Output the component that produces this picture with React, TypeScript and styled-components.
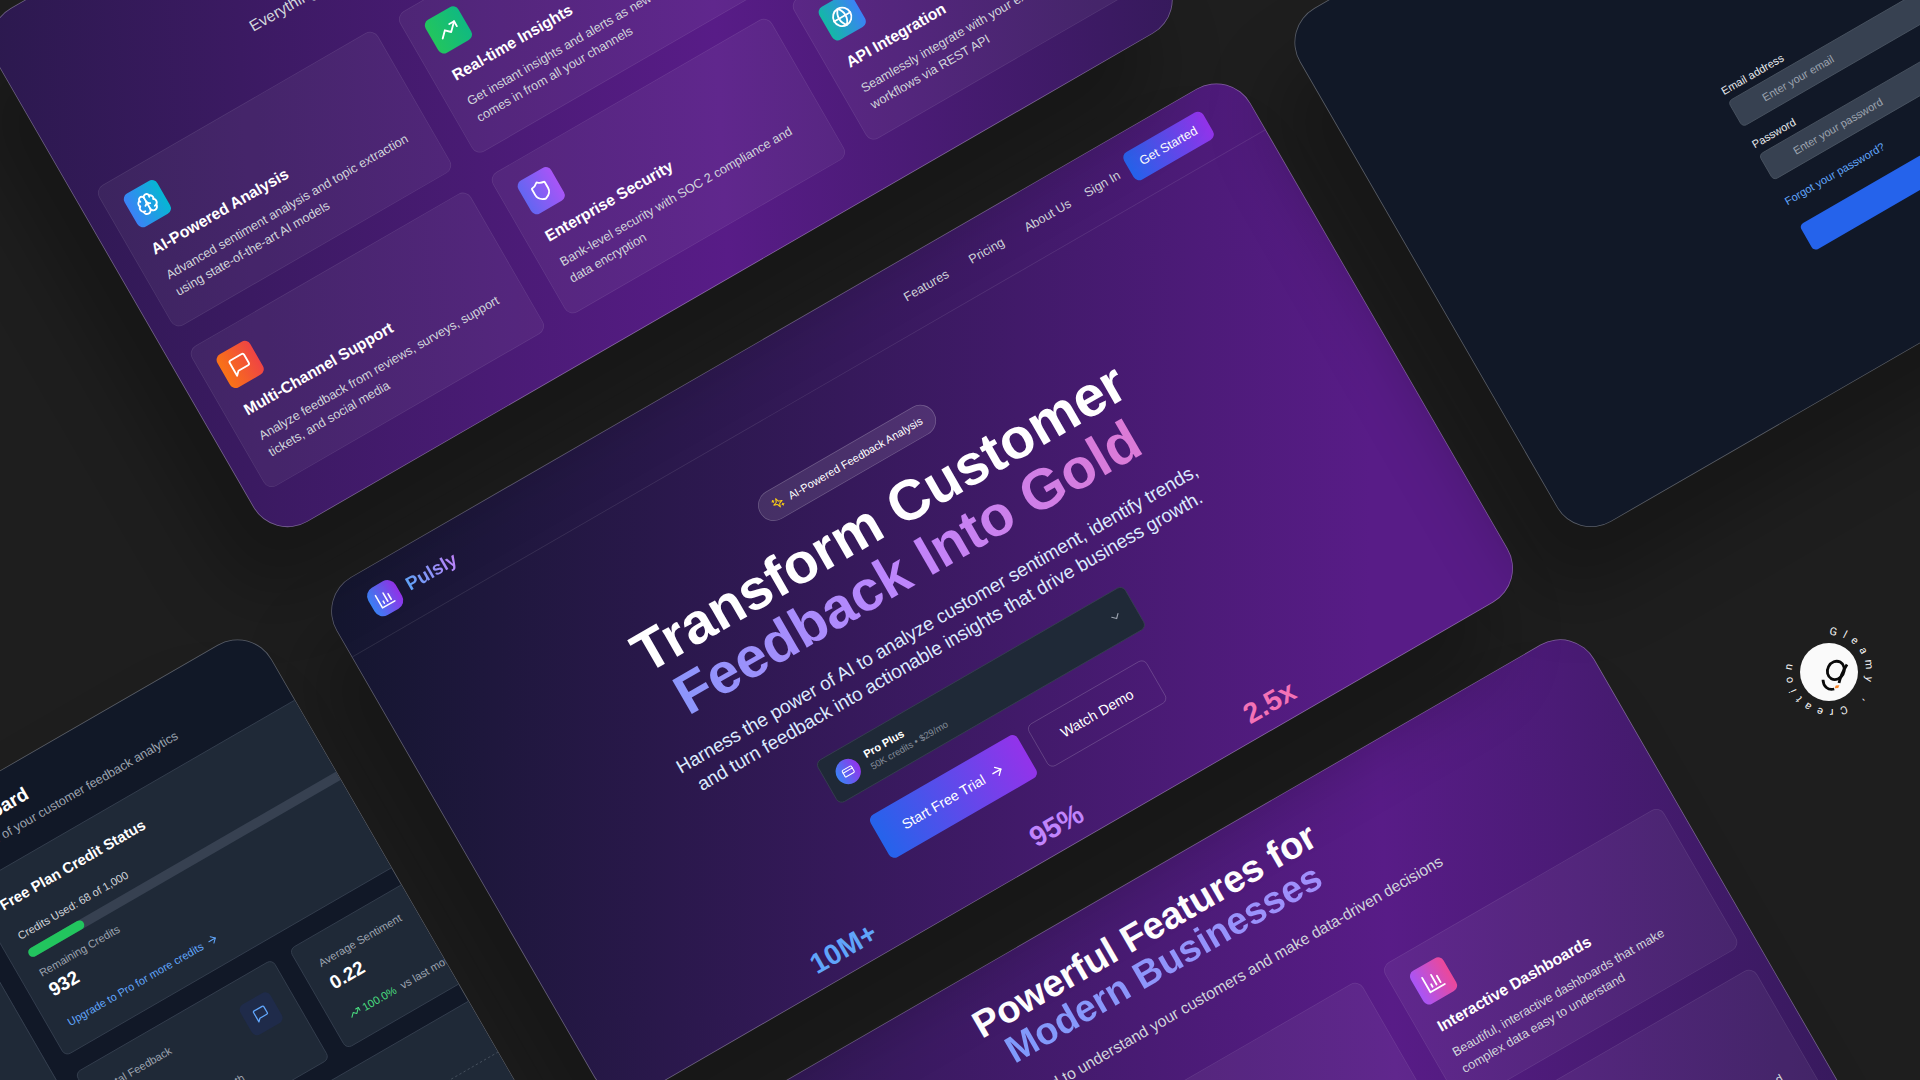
import React from "react";
import styled, { createGlobalStyle } from "styled-components";
import {
  ArrowRight,
  Brain,
  ChevronDown,
  CreditCard,
  Globe,
  Shield,
  TrendingUp,
} from "lucide-react";

const GlobalStyle = createGlobalStyle`
  *, *::before, *::after { box-sizing: border-box; }
  body {
    margin: 0;
    background: #1e1e1e;
    font-family: "Liberation Sans", Arial, sans-serif;
    color: #ffffff;
    overflow: hidden;
  }
  h1, h2, h3, p { margin: 0; }
  a { color: inherit; text-decoration: none; }
  button, input { font-family: inherit; }
`;

/* ---------- Board ---------- */

const Stage = styled.main`
  position: relative;
  min-height: 100vh;
  overflow: hidden;
`;

const Board = styled.div`
  position: absolute;
  left: 50%;
  top: 50%;
  transform-origin: 0 0;
  transform: rotate(-30deg) scale(0.79);
`;

const Window = styled.section<{ $x: number; $y: number; $fill: string }>`
  position: absolute;
  left: ${(p) => p.$x}px;
  top: ${(p) => p.$y}px;
  width: 1336px;
  height: 751px;
  overflow: hidden;
  border: 1px solid rgba(255, 255, 255, 0.3);
  border-radius: 50px;
  background: ${(p) => p.$fill};
  background-origin: border-box;
  box-shadow: -64px 64px 90px rgba(0, 0, 0, 0.25);
`;

const HERO_FILL = "linear-gradient(120deg, #13162e, #581c87 87%)";
const FEATURES_FILL =
  "linear-gradient(117deg, #0f172a -38%, #581c87 61%, #0f172a 143%)";
const DARK_FILL = "#111827";

/* ---------- Icons ---------- */

const Line = ({ size, d }: { size: number; d: string[] }) => (
  <svg
    width={size}
    height={size}
    viewBox="0 0 24 24"
    fill="none"
    stroke="currentColor"
    strokeWidth={2}
    strokeLinecap="round"
    strokeLinejoin="round"
    aria-hidden="true"
  >
    {d.map((path) => (
      <path key={path} d={path} />
    ))}
  </svg>
);

const ChartIcon = ({ size = 24 }: { size?: number }) => (
  <Line size={size} d={["M3 3v18h18", "M18 17V9", "M13 17V5", "M8 17v-3"]} />
);

const MessageIcon = ({ size = 24 }: { size?: number }) => (
  <Line
    size={size}
    d={["M21 15a2 2 0 0 1-2 2H7l-4 4V5a2 2 0 0 1 2-2h14a2 2 0 0 1 2 2z"]}
  />
);

const SparklesIcon = ({ size = 24 }: { size?: number }) => (
  <Line
    size={size}
    d={[
      "m12 3-1.912 5.813a2 2 0 0 1-1.275 1.275L3 12l5.813 1.912a2 2 0 0 1 1.275 1.275L12 21l1.912-5.813a2 2 0 0 1 1.275-1.275L21 12l-5.813-1.912a2 2 0 0 1-1.275-1.275L12 3Z",
      "M5 3v4",
      "M19 17v4",
      "M3 5h4",
      "M17 19h4",
    ]}
  />
);

/* ---------- Hero ---------- */

const Header = styled.header`
  display: flex;
  align-items: center;
  height: 88px;
  padding: 0 58px 0 53px;
  border-bottom: 1px solid rgba(255, 255, 255, 0.1);
`;

const Brand = styled.a`
  display: flex;
  align-items: center;
  gap: 12px;
  margin-right: auto;
`;

const BrandMark = styled.span`
  display: grid;
  place-items: center;
  width: 40px;
  height: 40px;
  border-radius: 12px;
  background: linear-gradient(90deg, #3b82f6, #9333ea);
`;

const BrandName = styled.span`
  font-size: 24px;
  line-height: 32px;
  font-weight: 700;
  background: linear-gradient(90deg, #60a5fa, #c084fc);
  background-clip: text;
  -webkit-background-clip: text;
  color: transparent;
`;

const Nav = styled.nav`
  display: flex;
  gap: 32px;
  font-size: 16px;
  color: #d1d5db;
`;

const SignIn = styled.a`
  margin: 0 14px 0 22px;
  font-size: 16px;
  color: #d1d5db;
`;

const GetStarted = styled.button`
  height: 40px;
  padding: 0 17px;
  border: 0;
  border-radius: 8px;
  background: linear-gradient(90deg, #2563eb, #9333ea);
  color: #ffffff;
  font-size: 16px;
`;

const HeroBody = styled.div`
  display: flex;
  flex-direction: column;
  align-items: center;
  padding: 80px 58px 0 54px;
  text-align: center;
`;

const Pill = styled.span`
  display: flex;
  align-items: center;
  gap: 8px;
  height: 40px;
  padding: 0 17px;
  margin-bottom: 24px;
  border: 1px solid rgba(255, 255, 255, 0.2);
  border-radius: 20px;
  background: rgba(255, 255, 255, 0.1);
  font-size: 14px;
  font-weight: 500;

  svg { color: #facc15; }
`;

const HeroTitle = styled.h1`
  align-self: stretch;
  margin-bottom: 24px;
  font-size: 72px;
  line-height: 72px;
  font-weight: 700;
`;

const GradientLine = styled.span<{ $fill: string }>`
  display: block;
  background: ${(p) => p.$fill};
  background-clip: text;
  -webkit-background-clip: text;
  color: transparent;
`;

const Lead = styled.p`
  max-width: 768px;
  margin-bottom: 32px;
  font-size: 24px;
  line-height: 32px;
  color: #dbeafe;
`;

const PlanPicker = styled.button`
  display: flex;
  align-items: center;
  gap: 12px;
  width: 450px;
  margin-bottom: 32px;
  padding: 12px 18px 12px 14px;
  border: 1px solid #374151;
  border-radius: 8px;
  background: #1f2937;
  color: #9ca3af;
  text-align: left;
`;

const PlanBadge = styled.span`
  display: grid;
  place-items: center;
  width: 32px;
  height: 32px;
  border-radius: 50%;
  background: linear-gradient(90deg, #3b82f6, #9333ea);
  color: #ffffff;
`;

const PlanText = styled.span`
  display: flex;
  flex: 1;
  flex-direction: column;
`;

const PlanName = styled.span`
  font-size: 14px;
  line-height: 20px;
  font-weight: 600;
  color: #ffffff;
`;

const PlanNote = styled.span`
  font-size: 12px;
  line-height: 16px;
  color: #848c99;
`;

const Actions = styled.div`
  display: flex;
  gap: 16px;
  margin-bottom: 46px;
`;

const Action = styled.button<{ $primary?: boolean }>`
  display: flex;
  align-items: center;
  gap: 8px;
  height: 62px;
  padding: 0 34px;
  border: ${(p) => (p.$primary ? "0" : "1px solid rgba(255, 255, 255, 0.2)")};
  border-radius: 8px;
  background: ${(p) =>
    p.$primary ? "linear-gradient(90deg, #2563eb, #9333ea)" : "transparent"};
  color: #ffffff;
  font-size: 18px;
`;

const Stats = styled.div`
  display: grid;
  grid-template-columns: repeat(3, 1fr);
  gap: 34px;
  width: 900px;
`;

const Stat = styled.strong<{ $color: string }>`
  font-size: 36px;
  line-height: 40px;
  font-weight: 700;
  color: ${(p) => p.$color};
`;

const Hero = () => (
  <>
    <Header>
      <Brand href="#">
        <BrandMark>
          <ChartIcon />
        </BrandMark>
        <BrandName>Pulsly</BrandName>
      </Brand>
      <Nav>
        <a href="#features">Features</a>
        <a href="#pricing">Pricing</a>
        <a href="#about">About Us</a>
      </Nav>
      <SignIn href="#signin">Sign In</SignIn>
      <GetStarted type="button">Get Started</GetStarted>
    </Header>
    <HeroBody>
      <Pill>
        <SparklesIcon size={16} />
        AI-Powered Feedback Analysis
      </Pill>
      <HeroTitle>
        Transform Customer
        <GradientLine $fill="linear-gradient(90deg, #60a5fa, #c084fc, #f472b6)">
          Feedback Into Gold
        </GradientLine>
      </HeroTitle>
      <Lead>
        Harness the power of AI to analyze customer sentiment, identify trends,
        and turn feedback into actionable insights that drive business growth.
      </Lead>
      <PlanPicker type="button" aria-haspopup="listbox">
        <PlanBadge>
          <CreditCard size={16} />
        </PlanBadge>
        <PlanText>
          <PlanName>Pro Plus</PlanName>
          <PlanNote>50K credits • $29/mo</PlanNote>
        </PlanText>
        <ChevronDown size={18} />
      </PlanPicker>
      <Actions>
        <Action type="button" $primary>
          Start Free Trial
          <ArrowRight size={20} />
        </Action>
        <Action type="button">Watch Demo</Action>
      </Actions>
      <Stats>
        <Stat $color="#60a5fa">10M+</Stat>
        <Stat $color="#c084fc">95%</Stat>
        <Stat $color="#f472b6">2.5x</Stat>
      </Stats>
    </HeroBody>
  </>
);

/* ---------- Features ---------- */

const FeaturesBody = styled.div`
  padding: 38px 20px 0 26px;
  text-align: center;
`;

const FeaturesTitle = styled.h2`
  margin-bottom: 24px;
  font-size: 48px;
  line-height: 48px;
  font-weight: 700;
`;

const FeaturesLead = styled.p`
  margin-bottom: 65px;
  font-size: 20px;
  line-height: 28px;
  color: #d1d5db;
`;

const FeatureGrid = styled.div`
  display: grid;
  grid-template-columns: repeat(3, 1fr);
  gap: 30px 32px;
  text-align: left;
`;

const FeatureCard = styled.article`
  padding: 24px;
  border: 1px solid rgba(255, 255, 255, 0.08);
  border-radius: 12px;
  background: rgba(255, 255, 255, 0.05);
`;

const FeatureIcon = styled.span<{ $from: string; $to: string }>`
  display: grid;
  place-items: center;
  width: 48px;
  height: 48px;
  margin-bottom: 16px;
  border-radius: 8px;
  background: linear-gradient(90deg, ${(p) => p.$from}, ${(p) => p.$to});
`;

const FeatureName = styled.h3`
  margin-bottom: 12px;
  font-size: 20px;
  line-height: 28px;
  font-weight: 600;
`;

const FeatureText = styled.p`
  min-height: 51px;
  font-size: 16px;
  line-height: 24px;
  color: #d1d5db;
`;

const FEATURES = [
  {
    icon: <Brain size={28} />,
    from: "#3b82f6",
    to: "#06b6d4",
    name: "AI-Powered Analysis",
    text: "Advanced sentiment analysis and topic extraction using state-of-the-art AI models",
  },
  {
    icon: <TrendingUp size={28} />,
    from: "#22c55e",
    to: "#10b981",
    name: "Real-time Insights",
    text: "Get instant insights and alerts as new feedback comes in from all your channels",
  },
  {
    icon: <ChartIcon size={28} />,
    from: "#a855f7",
    to: "#ec4899",
    name: "Interactive Dashboards",
    text: "Beautiful, interactive dashboards that make complex data easy to understand",
  },
  {
    icon: <MessageIcon size={28} />,
    from: "#f97316",
    to: "#ef4444",
    name: "Multi-Channel Support",
    text: "Analyze feedback from reviews, surveys, support tickets, and social media",
  },
  {
    icon: <Shield size={28} />,
    from: "#6366f1",
    to: "#a855f7",
    name: "Enterprise Security",
    text: "Bank-level security with SOC 2 compliance and data encryption",
  },
  {
    icon: <Globe size={28} />,
    from: "#14b8a6",
    to: "#3b82f6",
    name: "API Integration",
    text: "Seamlessly integrate with your existing tools and workflows via REST API",
  },
];

const Features = () => (
  <FeaturesBody>
    <FeaturesTitle>
      Powerful Features for
      <GradientLine $fill="linear-gradient(90deg, #60a5fa, #c084fc)">
        Modern Businesses
      </GradientLine>
    </FeaturesTitle>
    <FeaturesLead>
      Everything you need to understand your customers and make data-driven
      decisions
    </FeaturesLead>
    <FeatureGrid>
      {FEATURES.map((f) => (
        <FeatureCard key={f.name}>
          <FeatureIcon $from={f.from} $to={f.to}>
            {f.icon}
          </FeatureIcon>
          <FeatureName>{f.name}</FeatureName>
          <FeatureText>{f.text}</FeatureText>
        </FeatureCard>
      ))}
    </FeatureGrid>
  </FeaturesBody>
);

/* ---------- Login ---------- */

const LoginForm = styled.form`
  display: flex;
  flex-direction: column;
  width: 448px;
  margin: 339px auto 0;
`;

const Field = styled.label`
  display: flex;
  flex-direction: column;
  gap: 4px;
  margin-bottom: 16px;
  font-size: 14px;
  line-height: 20px;
  color: #e5e7eb;
`;

const Input = styled.input`
  height: 38px;
  padding: 0 12px 0 40px;
  border: 1px solid #4b5563;
  border-radius: 6px;
  background: #374151;
  color: #ffffff;
  font-size: 14px;

  &::placeholder { color: #9ca3af; }
`;

const Forgot = styled.a`
  align-self: flex-start;
  margin: 5px 0 24px;
  font-size: 14px;
  line-height: 20px;
  color: #60a5fa;
`;

const Submit = styled.button`
  height: 38px;
  border: 0;
  border-radius: 6px;
  background: #2563eb;
  color: #ffffff;
  font-size: 14px;
`;

const Login = () => (
  <LoginForm>
    <Field>
      Email address
      <Input type="email" placeholder="Enter your email" />
    </Field>
    <Field>
      Password
      <Input type="password" placeholder="Enter your password" />
    </Field>
    <Forgot href="#forgot">Forgot your password?</Forgot>
    <Submit type="button">Sign in</Submit>
  </LoginForm>
);

/* ---------- Dashboard ---------- */

const DashLayout = styled.div`
  display: flex;
  height: 100%;
`;

const Sidebar = styled.aside`
  flex: 0 0 833px;
  border-right: 1px solid #374151;
  background: #1f2937;
`;

const DashMain = styled.div`
  display: flex;
  flex: 0 0 auto;
  flex-direction: column;
  gap: 24px;
  width: 1274px;
  padding: 24px;
`;

const DashTitle = styled.h2`
  font-size: 24px;
  line-height: 32px;
  font-weight: 700;
`;

const DashSub = styled.p`
  margin-top: 4px;
  font-size: 16px;
  line-height: 24px;
  color: #9ca3af;
`;

const Panel = styled.article`
  padding: 24px;
  border: 1px solid #374151;
  border-radius: 8px;
  background: #1f2937;
`;

const PanelTitle = styled.h3`
  margin-bottom: 18px;
  font-size: 19px;
  line-height: 32px;
  font-weight: 600;
`;

const Small = styled.p`
  font-size: 14px;
  line-height: 20px;
  color: #9ca3af;
`;

const Used = styled(Small)`
  margin-bottom: 10px;
  color: #d1d5db;
`;

const Track = styled.div`
  height: 12px;
  margin-bottom: 12px;
  border-radius: 6px;
  background: #374151;
`;

const Fill = styled.div`
  height: 100%;
  border-radius: 6px;
  background: #22c55e;
`;

const Value = styled.p`
  font-size: 24px;
  line-height: 32px;
  font-weight: 700;
`;

const Upgrade = styled.a`
  display: flex;
  align-items: center;
  gap: 6px;
  margin-top: 20px;
  font-size: 14px;
  line-height: 20px;
  color: #60a5fa;
`;

const CardRow = styled.div<{ $cols: number }>`
  display: grid;
  grid-template-columns: repeat(${(p) => p.$cols}, 1fr);
  gap: 24px;
`;

const MetricTop = styled.div`
  display: flex;
  align-items: center;
  justify-content: space-between;
  margin-bottom: 20px;

  ${Value} { margin-top: 4px; }
`;

const MetricIcon = styled.span`
  display: grid;
  place-items: center;
  width: 44px;
  height: 44px;
  border-radius: 8px;
  background: #1f2b4a;
  color: #60a5fa;
`;

const Trend = styled.div`
  display: flex;
  align-items: center;
  gap: 4px;
  font-size: 14px;
  line-height: 20px;
  color: #4ade80;
`;

const TrendNote = styled.span`
  margin-left: 4px;
  color: #9ca3af;
  white-space: nowrap;
`;

const Chart = styled.svg`
  display: block;
  width: 100%;
  height: 180px;
`;

const METRICS = [
  { name: "Total Feedback", value: "68", icon: true },
  { name: "Average Sentiment", value: "0.22", icon: false },
];

const USED = 68;
const TOTAL = 1000;

const Dashboard = () => (
  <DashLayout>
    <Sidebar />
    <DashMain>
      <div>
        <DashTitle>Dashboard</DashTitle>
        <DashSub>Overview of your customer feedback analytics</DashSub>
      </div>
      <Panel>
        <PanelTitle>Free Plan Credit Status</PanelTitle>
        <Used>Credits Used: 68 of 1,000</Used>
        <Track>
          <Fill style={{ width: `${(USED / TOTAL) * 100}%` }} />
        </Track>
        <Small>Remaining Credits</Small>
        <Value>932</Value>
        <Upgrade href="#upgrade">
          Upgrade to Pro for more credits
          <ArrowRight size={16} />
        </Upgrade>
      </Panel>
      <CardRow $cols={4}>
        {METRICS.map((m) => (
          <Panel key={m.name}>
            <MetricTop>
              <div>
                <Small>{m.name}</Small>
                <Value>{m.value}</Value>
              </div>
              {m.icon && (
                <MetricIcon>
                  <MessageIcon size={20} />
                </MetricIcon>
              )}
            </MetricTop>
            <Trend>
              <TrendingUp size={16} />
              100.0%
              <TrendNote>vs last month</TrendNote>
            </Trend>
          </Panel>
        ))}
      </CardRow>
      <CardRow $cols={2}>
        <Panel>
          <Chart aria-hidden="true">
            <line
              x1="0"
              y1="50"
              x2="100%"
              y2="50"
              stroke="#4b5563"
              strokeDasharray="3 3"
            />
          </Chart>
        </Panel>
      </CardRow>
    </DashMain>
  </DashLayout>
);

/* ---------- Studio badge ---------- */

const Badge = styled.svg`
  position: absolute;
  top: 622px;
  right: 41px;
  font-family: Roboto, sans-serif;
`;

const StudioBadge = () => (
  <Badge width="100" height="100" viewBox="-50 -50 100 100" aria-label="Gleamy Creation">
    <defs>
      <path id="ring" d="M0 -37A37 37 0 1 1 0 37A37 37 0 1 1 0 -37" />
    </defs>
    <circle r="29" fill="#fafafa" />
    <text fill="#f5f5f5" fontSize="11" letterSpacing="6">
      <textPath href="#ring">Gleamy ' Creation</textPath>
    </text>
    <g fill="none" stroke="#0a0a0a" strokeLinecap="butt">
      <ellipse cx="6.8" cy="-1.6" rx="8.2" ry="9.4" strokeWidth="2.8" transform="rotate(28 6.8 -1.6)" />
      <path d="M18 -7.5C14 -1 11.5 4 10 11" strokeWidth="2.8" />
      <path d="M-6 7.8C-5.8 14.5 -1 18.6 5.2 17" strokeWidth="2.8" />
    </g>
    <path d="M6.8 13.4L10.4 13.2L9.2 16L5.6 16.2Z" fill="#f9872b" />
  </Badge>
);

export default function App() {
  return (
    <>
      <GlobalStyle />
      <Stage>
        <Board>
          <Window $x={-716} $y={482} $fill={FEATURES_FILL}>
            <Features />
          </Window>
          <Window $x={-741} $y={-345} $fill={HERO_FILL}>
            <Hero />
          </Window>
          <Window $x={-754} $y={-1184} $fill={FEATURES_FILL}>
            <Features />
          </Window>
          <Window $x={-2166} $y={-355} $fill={DARK_FILL}>
            <Dashboard />
          </Window>
          <Window $x={675} $y={-359} $fill={DARK_FILL}>
            <Login />
          </Window>
        </Board>
        <StudioBadge />
      </Stage>
    </>
  );
}
